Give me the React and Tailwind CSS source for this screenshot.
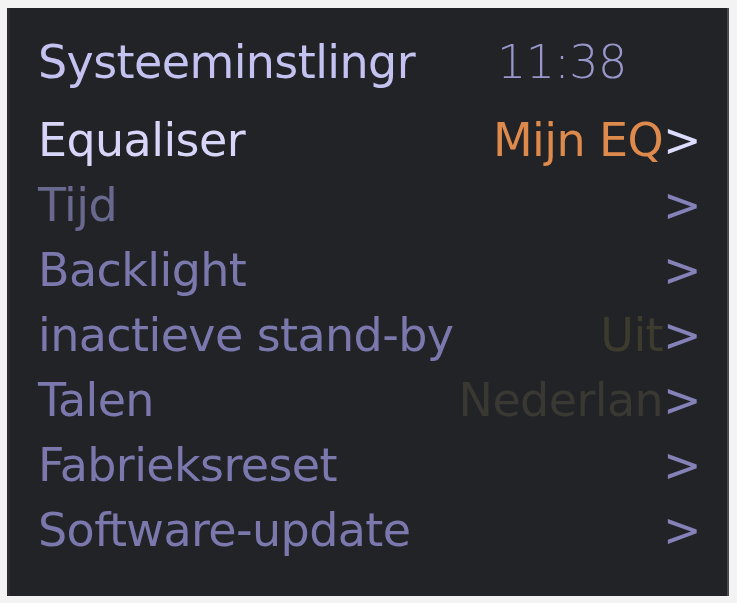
import React from "react";

const items = [
  { label: "Equaliser", value: "Mijn EQ", active: true },
  { label: "Tijd", dim: true },
  { label: "Backlight" },
  { label: "inactieve stand-by", value: "Uit", valueClass: "text-[#3c3b2e]" },
  { label: "Talen", value: "Nederlan", valueClass: "text-[#393832]" },
  { label: "Fabrieksreset" },
  { label: "Software-update" },
];

const MenuRow = ({ item }) => {
  const labelColor = item.active
    ? "text-[#d8d6f8]"
    : item.dim
    ? "text-[#69688e]"
    : "text-[#7a78ad]";
  return (
    <div className="flex items-center justify-between h-[65px] leading-[65px]">
      <span className={labelColor}>{item.label}</span>
      <span className="flex items-center">
        {item.value && (
          <span className={item.active ? "text-[#de8a4c]" : item.valueClass}>
            {item.value}
          </span>
        )}
        <span className={item.active ? "text-[#dcdcff]" : "text-[#8482b8]"}>
          &gt;
        </span>
      </span>
    </div>
  );
};

export default function App() {
  return (
    <div className="w-[737px] h-[603px] bg-[#f3f3f3] pt-[8px] pl-[7px] overflow-hidden">
      <div
        className="w-[722px] h-[588px] bg-[#222327] border-l-[3px] border-l-[#2c2c2e] border-r-[2px] border-r-[#4a4a4e] pl-[28px] pr-[26px] pt-[22px] text-[46px] tracking-[-0.6px] blur-[0.7px]"
        style={{ fontFamily: '"DejaVu Sans", "Liberation Sans", sans-serif' }}
      >
        {/* Header */}
        <div className="flex h-[65px] leading-[65px] mb-[13px]">
          <span className="w-[459px] text-[#c4c2f0]">Systeeminstlingr</span>
          <span className="text-[#9897cb] font-light">11:38</span>
        </div>

        {/* Menu */}
        {items.map((item) => (
          <MenuRow key={item.label} item={item} />
        ))}
      </div>
    </div>
  );
}
